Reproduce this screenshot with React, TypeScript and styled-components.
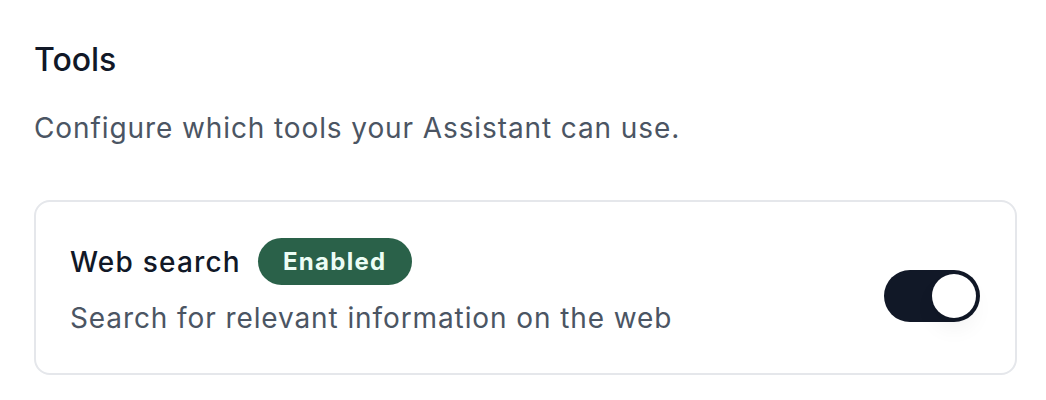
import styled, { createGlobalStyle } from 'styled-components';

const GlobalStyle = createGlobalStyle`
  html, body {
    margin: 0;
    padding: 0;
    background: #ffffff;
    font-family: Inter, "Noto Sans", "Liberation Sans", sans-serif;
    -webkit-font-smoothing: antialiased;
  }
`;

const Page = styled.div`
  padding: 40px 29px 0 34px;
`;

const Heading = styled.h2`
  margin: 0;
  font-size: 32px;
  line-height: 40px;
  font-weight: 500;
  color: #111827;
`;

const Lead = styled.p`
  margin: 28px 0 0;
  font-size: 28px;
  line-height: 40px;
  letter-spacing: 0.9px;
  color: #4b5563;
`;

const Card = styled.div`
  margin-top: 52px;
  display: flex;
  align-items: center;
  justify-content: space-between;
  border: 2px solid #e5e7eb;
  border-radius: 16px;
  padding: 36px 35px 35px 34px;
`;

const Info = styled.div`
  display: flex;
  flex-direction: column;
  gap: 13px;
`;

const TitleRow = styled.div`
  display: flex;
  align-items: center;
  gap: 17px;
`;

const Name = styled.span`
  font-size: 28px;
  line-height: 40px;
  font-weight: 500;
  letter-spacing: 1.2px;
  color: #111827;
`;

const Badge = styled.span<{ $tone: 'on' | 'off' }>`
  display: inline-flex;
  align-items: center;
  height: 47px;
  padding: 0 25px;
  border-radius: 999px;
  font-size: 24px;
  font-weight: 700;
  letter-spacing: 1.3px;
  background: ${({ $tone }) => ($tone === 'on' ? '#2a6149' : '#e5e7eb')};
  color: ${({ $tone }) => ($tone === 'on' ? '#ecfdf5' : '#374151')};
`;

const Hint = styled.span`
  font-size: 28px;
  line-height: 40px;
  letter-spacing: 0.9px;
  color: #4b5563;
`;

const Track = styled.button<{ $on: boolean }>`
  flex-shrink: 0;
  width: 96px;
  height: 52px;
  margin-top: 16px;
  border: none;
  padding: 4px;
  border-radius: 999px;
  background: ${({ $on }) => ($on ? '#111827' : '#e5e7eb')};
  display: flex;
  justify-content: ${({ $on }) => ($on ? 'flex-end' : 'flex-start')};
  cursor: pointer;
`;

const Knob = styled.span`
  width: 44px;
  height: 44px;
  border-radius: 50%;
  background: #ffffff;
  box-shadow: 0 12px 24px -4px rgba(0, 0, 0, 0.07), 0 6px 10px -6px rgba(0, 0, 0, 0.05);
`;

export default function App() {
  const enabled = true;
  return (
    <>
      <GlobalStyle />
      <Page>
        <Heading>Tools</Heading>
        <Lead>Configure which tools your Assistant can use.</Lead>
        <Card>
          <Info>
            <TitleRow>
              <Name>Web search</Name>
              <Badge $tone={enabled ? 'on' : 'off'}>{enabled ? 'Enabled' : 'Disabled'}</Badge>
            </TitleRow>
            <Hint>Search for relevant information on the web</Hint>
          </Info>
          <Track $on={enabled} role="switch" aria-checked={enabled}>
            <Knob />
          </Track>
        </Card>
      </Page>
    </>
  );
}
